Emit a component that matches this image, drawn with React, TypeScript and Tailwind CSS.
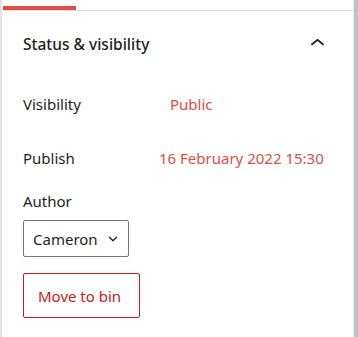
import { ChevronDown } from "lucide-react";

const font = { fontFamily: '"Noto Sans", "Open Sans", sans-serif' };

function Row({ label, value, labelWidth }: { label: string; value: string; labelWidth: string }) {
  return (
    <div className="flex h-[20px] items-center leading-[20px]">
      <span className={`${labelWidth} shrink-0 text-[#1e1e1e]`}>{label}</span>
      <span className="text-[#e14d43]">{value}</span>
    </div>
  );
}

export default function App() {
  return (
    <div
      className="flex h-[337px] w-[358px] bg-white text-[15px] text-[#1e1e1e] antialiased"
      style={font}
    >
      <div className="flex flex-1 flex-col border-l-2 border-[#e4e4e4]">
        {/* tabs */}
        <div className="flex h-[10px] items-end">
          <div className="ml-px h-[4px] w-[73px] bg-[#e14d43]" />
        </div>
        <div className="h-px bg-[#e0e0e0]" />

        {/* panel header */}
        <div className="flex items-center justify-between pl-[21px] pr-[21px] pt-[22px]">
          <span className="text-[15.5px] font-medium leading-[20px]">Status &amp; visibility</span>
          <svg viewBox="0 0 24 24" className="-my-[4px] h-[29px] w-[29px]" fill="#1e1e1e">
            <path d="M6.5 12.4L12 8l5.5 4.4-.9 1.2L12 10l-4.6 3.6-.9-1.2z" />
          </svg>
        </div>

        {/* panel body */}
        <div className="flex flex-col px-[21px]">
          <div className="mt-[40px]">
            <Row label="Visibility" value="Public" labelWidth="w-[147px]" />
          </div>
          <div className="mt-[34px]">
            <Row label="Publish" value="16 February 2022 15:30" labelWidth="w-[136px]" />
          </div>
          <div className="mt-[23px] leading-[20px]">Author</div>
          <div className="mt-[9px] flex h-[37px] w-[106px] items-center justify-between rounded-[2px] border border-[#757575] pl-[9px] pr-[8px] leading-[20px]">
            <span>Cameron</span>
            <ChevronDown size={14} strokeWidth={2.2} className="mt-px" />
          </div>
          <button
            type="button"
            className="mt-[16px] flex h-[45px] w-[117px] items-center rounded-[2px] border border-[#cc1818] pl-[14px] leading-[20px] text-[#cc1818]"
          >
            Move to bin
          </button>
        </div>
      </div>
      <div className="w-px bg-[#ececec]" />
      <div className="w-[4px] bg-[#c2c2c2]" />
    </div>
  );
}
